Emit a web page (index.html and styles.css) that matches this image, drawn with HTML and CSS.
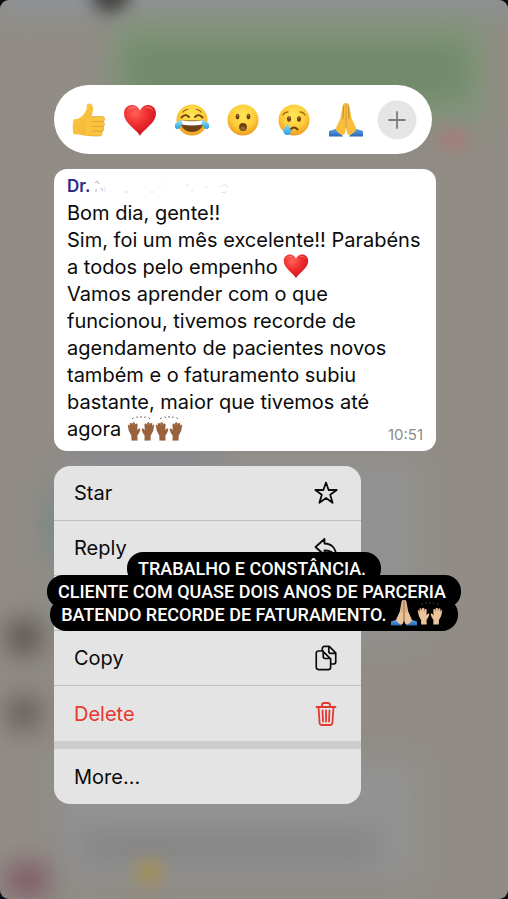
FILE: index.html
```html
<!DOCTYPE html>
<html lang="pt-BR">
<head>
    <meta charset="UTF-8">
    <meta name="viewport" content="width=device-width, initial-scale=1.0">
    <title>Mensagem</title>
    <link rel="stylesheet" href="styles.css">
</head>
<body>
    <!-- Shared emoji shapes -->
    <svg class="sprites" width="0" height="0" aria-hidden="true">
        <defs>
            <radialGradient id="face" cx="50%" cy="35%" r="65%">
                <stop offset="0" stop-color="#ffe75a"/>
                <stop offset="0.6" stop-color="#fdcd38"/>
                <stop offset="1" stop-color="#ee9c24"/>
            </radialGradient>
            <linearGradient id="skin" x1="0" y1="0" x2="1" y2="1">
                <stop offset="0" stop-color="#fdcf4c"/>
                <stop offset="1" stop-color="#f0ac2a"/>
            </linearGradient>
            <radialGradient id="red" cx="35%" cy="25%" r="80%">
                <stop offset="0" stop-color="#ff6358"/>
                <stop offset="0.5" stop-color="#ef2b2d"/>
                <stop offset="1" stop-color="#c5141d"/>
            </radialGradient>
            <linearGradient id="tear" x1="0" y1="0" x2="0" y2="1">
                <stop offset="0" stop-color="#9fe3fb"/>
                <stop offset="1" stop-color="#279fe0"/>
            </linearGradient>
            <linearGradient id="sleeve" x1="0" y1="0" x2="0" y2="1">
                <stop offset="0" stop-color="#64a5ea"/>
                <stop offset="1" stop-color="#2967b5"/>
            </linearGradient>
        </defs>
        <symbol id="thumb" viewBox="0 0 34 34">
            <path fill="url(#skin)" d="M1.5 16.5C6 16 9 14.500 11.500 11.500C14 8.500 15 6 14.800 2.500C14.800-.2 19.500-.3 20.700 3C21.800 6.500 20.600 9.500 19.500 14H30Q32.500 15 31.500 18L31 28L27 33H17C12 33 8 30.800 1.500 31.300Q-.1 24 1.500 16.500Z"/>
            <g fill="#fac43f" stroke="#dc982a" stroke-width=".6">
                <rect x="18" y="13.500" width="14.500" height="5.300" rx="2.600"/>
                <rect x="18.500" y="18.500" width="14" height="5.200" rx="2.600"/>
                <rect x="18" y="23.400" width="13.800" height="5" rx="2.500"/>
                <rect x="17.500" y="28.200" width="12.500" height="4.800" rx="2.400"/>
            </g>
            <path fill="#f9c340" d="M14 14h7c-1.500 2-1.500 4-1 6.500 1 3-.5 5.500 0 8l-2 4-5-1z"/>
        </symbol>
        <symbol id="heart" viewBox="0 0 34 34">
            <path fill="url(#red)" d="M17 33C14.500 27 1 20.500 1 10.500C1 1 13 -1 17 7.500C21-1 33 1 33 10.500C33 20.500 19.500 27 17 33Z"/>
            <path fill="#ff9d91" opacity=".6" d="M4 8.500C5 3.500 11 2.500 14 5.500C10 4.500 6 5 4 8.500ZM21 5.500C24 2.500 29.500 3.500 30.500 8.500C28 5 25 4.500 21 5.500Z"/>
        </symbol>
        <symbol id="joy" viewBox="0 0 34 34">
            <circle cx="17" cy="17" r="15.500" fill="url(#face)"/>
            <path fill="none" stroke="#8a5312" stroke-width="1.200" stroke-linecap="round" d="M8 9Q9.500 6.500 12.500 6.500M21.500 6.500Q24.500 6.500 26 9"/>
            <path fill="none" stroke="#6b3f0e" stroke-width="1.900" stroke-linecap="round" d="M6.500 14.500Q10.500 10 14 14M20 14Q23.500 10 27.500 14.500"/>
            <path fill="#704018" d="M5.500 17.500H28.500C28.500 25 23.500 29 17 29S5.500 25 5.500 17.500Z"/>
            <path fill="#fff" d="M6 17.300Q17 19 28 17.300Q28 20 26.500 21.800Q17 23 7.500 21.800Q6 20 6 17.300Z"/>
            <path fill="url(#tear)" d="M7 16.500C7.500 21 6.500 25.500 2.800 26C-.8 26.300-1.400 21.500 1.500 19.500Q4 18 7 16.500ZM27 16.500C26.500 21 27.500 25.500 31.200 26C34.800 26.300 35.400 21.500 32.500 19.500Q30 18 27 16.500Z"/>
        </symbol>
        <symbol id="wow" viewBox="0 0 34 34">
            <circle cx="17" cy="17" r="15.500" fill="url(#face)"/>
            <ellipse cx="11.500" cy="13.500" rx="1.900" ry="2.700" fill="#6b3f0e"/>
            <ellipse cx="22.500" cy="13.500" rx="1.900" ry="2.700" fill="#6b3f0e"/>
            <circle cx="11.200" cy="12.500" r=".7" fill="#c9a06b"/>
            <circle cx="22.200" cy="12.500" r=".7" fill="#c9a06b"/>
            <ellipse cx="17" cy="24" rx="3.900" ry="4" fill="#6b3f0e"/>
            <ellipse cx="17" cy="25.500" rx="2.600" ry="2" fill="#9a632b"/>
        </symbol>
        <symbol id="sad" viewBox="0 0 34 34">
            <circle cx="17" cy="17" r="15.500" fill="url(#face)"/>
            <ellipse cx="12" cy="16" rx="2" ry="2.800" fill="#6b3f0e"/>
            <ellipse cx="22" cy="16" rx="2" ry="2.800" fill="#6b3f0e"/>
            <circle cx="12" cy="15" r=".7" fill="#c9a06b"/>
            <circle cx="22" cy="15" r=".7" fill="#c9a06b"/>
            <path fill="none" stroke="#a96e1c" stroke-width="1.400" stroke-linecap="round" d="M6 12Q7.500 9 11 9M28 12Q26.500 9 23 9"/>
            <path fill="none" stroke="#6b3f0e" stroke-width="1.900" stroke-linecap="round" d="M13.500 26.500Q17 22.500 20.500 26.500"/>
            <path fill="url(#tear)" d="M10.500 19.500C11.500 23.500 14 25.500 14 28.200C14 30.500 12.300 32 10.300 32S6.500 30.500 6.500 28.200C6.500 25.500 9.800 23.500 10.500 19.500Z"/>
        </symbol>
        <symbol id="pray" viewBox="0 0 34 34">
            <path fill="url(#sleeve)" d="M0 28L8 25.500L14 33.500H0ZM34 28L26 25.500L20 33.500H34Z"/>
            <path fill="currentColor" d="M16.800 0C14.500-.3 13.700 1.500 13.500 4L11.500 15L6.500 26C8 29 11 31.500 14 32.500C16 31 16.800 28 16.800 24ZM17.200 0C19.500-.3 20.300 1.500 20.500 4L22.500 15L27.500 26C26 29 23 31.500 20 32.500C18 31 17.200 28 17.200 24Z"/>
            <path fill="none" stroke="#8d5514" stroke-opacity=".6" stroke-width=".8" d="M17 1V25M14.500 3L14 16M19.500 3L20 16"/>
        </symbol>
        <symbol id="hands" viewBox="0 0 28 26">
            <path fill="currentColor" stroke="#000" stroke-opacity=".12" stroke-width=".4" d="M4.500 25.500L4.300 20.500Q1.200 16 .8 10.500Q1.200 9 2.400 10.500L3 12L2.600 8.700Q3.800 7.100 5 8.700L5.300 11L5.500 7.800Q6.800 6.600 7.900 8L7.800 11.500L8.300 9Q9.800 8 10.500 9.500L10.200 15.500L11.500 13.800Q13.400 13 13.200 15Q12.500 18 10.300 20.500L10.500 25.500Z"/>
            <path fill="currentColor" stroke="#000" stroke-opacity=".12" stroke-width=".4" d="M23.500 25.500L23.700 20.500Q26.800 16 27.200 10.500Q26.800 9 25.600 10.500L25 12L25.400 8.700Q24.200 7.100 23 8.700L22.700 11L22.500 7.800Q21.200 6.600 20.100 8L20.200 11.500L19.700 9Q18.200 8 17.500 9.500L17.800 15.500L16.500 13.800Q14.600 13 14.800 15Q15.500 18 17.700 20.500L17.500 25.500Z"/>
            <path fill="none" stroke="#555" stroke-width="1" d="M5 4L6.500 2.700M9.800 1.500L10.500 3M14 1V2.700M18.200 1.500L17.500 3M23 4L21.500 2.700"/>
        </symbol>
    </svg>

    <div class="screen">
        <!-- Blurred chat behind the menu -->
        <div class="backdrop" aria-hidden="true">
            <div class="blob top"></div>
            <div class="blob head"></div>
            <div class="blob green"></div>
            <div class="blob green-dark"></div>
            <div class="blob pink"></div>
            <div class="blob teal"></div>
            <div class="blob violet"></div>
            <div class="blob grey"></div>
            <div class="blob brown"></div>
            <div class="blob brown second"></div>
            <div class="blob grey low"></div>
            <div class="blob shade"></div>
            <div class="blob yellow"></div>
            <div class="blob rose"></div>
        </div>

        <main>
            <div class="reactions">
                <button aria-label="👍"><svg><use href="#thumb"/></svg></button>
                <button aria-label="❤️"><svg><use href="#heart"/></svg></button>
                <button aria-label="😂"><svg><use href="#joy"/></svg></button>
                <button aria-label="😮"><svg><use href="#wow"/></svg></button>
                <button aria-label="😢"><svg><use href="#sad"/></svg></button>
                <button aria-label="🙏"><svg class="gold"><use href="#pray"/></svg></button>
                <button class="plus" aria-label="+"><svg viewBox="0 0 40 40"><circle cx="20" cy="20" r="19.500" fill="#e5e5e6"/><path d="M20 12V28M12 20H28" stroke="#7d7d80" stroke-width="1.800" stroke-linecap="round"/></svg></button>
            </div>

            <article class="message">
                <h1>Dr. <svg class="smudge" viewBox="0 0 140 14" aria-hidden="true"><path d="M1 3L3 1L5 4M2 9V12M7 8L9 11" stroke="#7774b8" stroke-opacity=".6" fill="none"/><path d="M11 7V12M30 12H34M56 12H60M72 3V5M92 5H95M98 10V13M111 6L113 8M126 7Q131 3 134 7M133 11Q130 14 127 12" stroke="#d4d2e8" stroke-opacity=".7" fill="none"/></svg></h1>
                <p>Bom dia, gente!!<br>
                Sim, foi um mês excelente!! Parabéns<br>
                a todos pelo empenho <svg class="emoji" role="img" aria-label="❤️"><use href="#heart"/></svg><br>
                Vamos aprender com o que<br>
                funcionou, tivemos recorde de<br>
                agendamento de pacientes novos<br>
                também e o faturamento subiu<br>
                bastante, maior que tivemos até</p>
                <div class="last-line">
                    <p>agora <svg class="emoji wide" role="img" aria-label="🙌🏾"><use href="#hands"/></svg><svg class="emoji wide" role="img" aria-label="🙌🏾"><use href="#hands"/></svg></p>
                    <time>10:51</time>
                </div>
            </article>

            <div class="menu">
                <button>Star
                    <svg viewBox="0 0 26 26"><path d="M13 2.500L15.600 10H23.700L17.200 14.700L19.600 22.800L13 18L6.400 22.800L8.800 14.700L2.300 10H10.400Z"/></svg>
                </button>
                <button>Reply
                    <svg viewBox="0 0 26 26"><path d="M11.500 4L2.500 12L11.500 20V15.500C16 15.500 20 17 23 21C23 13 18.500 8.500 11.500 8.500Z"/></svg>
                </button>
                <div class="row"></div>
                <button>Copy
                    <svg viewBox="0 0 26 28"><path d="M9 6V4Q9 1.500 11.500 1.500H16.500L23.500 8.500V18Q23.500 20.500 21 20.500H18.500M16 1.500V7Q16 9 18 9H23.500M5 6.500H9.500L18 15V24Q18 26.500 15.500 26.500H5Q2.500 26.500 2.500 24V9Q2.500 6.500 5 6.500ZM10 6.500V12.500Q10 14.500 12 14.500H18"/></svg>
                </button>
                <button class="delete">Delete
                    <svg viewBox="0 0 26 26"><path d="M3.500 6H22.500M9 6V4Q9 2 11 2H15Q17 2 17 4V6M5.500 6L6.600 22Q6.800 24 8.800 24H17.200Q19.200 24 19.400 22L20.500 6M9.500 9.500L10 20.500M13 9.500V20.500M16.500 9.500L16 20.500"/></svg>
                </button>
                <button class="more">More...</button>
            </div>
        </main>

        <!-- Story caption lies over the menu -->
        <div class="caption">
            <p><span>TRABALHO E CONSTÂNCIA.</span></p>
            <p><span>CLIENTE COM QUASE DOIS ANOS DE PARCERIA</span></p>
            <p><span>BATENDO RECORDE DE FATURAMENTO. <svg class="emoji" role="img" aria-label="🙏🏼"><use href="#pray"/></svg><svg class="emoji" role="img" aria-label="🙌🏼"><use href="#hands"/></svg></span></p>
        </div>
    </div>
</body>
</html>
```
FILE: styles.css
```css
* {
    box-sizing: border-box;
}
body {
    margin: 0;
    background-color: #0c0f18;
    color: #0b0b0b;
    font-family: Inter, "Liberation Sans", sans-serif;
}
h1, p {
    margin: 0;
}
button {
    border: none;
    background: none;
    padding: 0;
    color: inherit;
    font: inherit;
}
.sprites {
    position: absolute;
}
.screen {
    position: relative;
    min-height: 100vh;
    overflow: hidden;
    border-radius: 9px;
    background-color: #918d86;
}
main {
    position: relative;
    padding: 85px 72px 94px 54px;
}

/* Blurred background */
.backdrop {
    position: absolute;
    inset: 0;
}
.blob {
    position: absolute;
    filter: blur(14px);
}
.top {
    top: -20px;
    left: 0;
    right: 0;
    height: 34px;
    background-color: #8d9398;
}
.head {
    top: -24px;
    left: 92px;
    width: 38px;
    height: 38px;
    border-radius: 50%;
    background-color: #454342;
    filter: blur(8px);
}
.green {
    top: 20px;
    left: 112px;
    right: 24px;
    height: 100px;
    background-color: #82977a;
}
.green-dark {
    top: 42px;
    left: 125px;
    right: 40px;
    height: 58px;
    background-color: #72896a;
}
.pink {
    top: 130px;
    right: 42px;
    width: 26px;
    height: 18px;
    background-color: #a67a76;
    filter: blur(8px);
}
.teal {
    top: 490px;
    left: 48px;
    width: 40px;
    height: 70px;
    background-color: #6f8482;
}
.violet {
    top: 454px;
    left: 70px;
    width: 150px;
    height: 14px;
    background-color: #75738a;
}
.grey {
    top: 460px;
    left: 60px;
    right: 90px;
    height: 180px;
    background-color: #929292;
}
.grey.low {
    top: 760px;
    height: 120px;
}
.brown {
    top: 620px;
    left: 7px;
    width: 34px;
    height: 34px;
    border-radius: 50%;
    background-color: #4c443f;
}
.brown.second {
    top: 696px;
    background-color: #5c524c;
}
.shade {
    top: 834px;
    left: 80px;
    right: 130px;
    height: 26px;
    background-color: #838383;
}
.yellow {
    top: 860px;
    left: 136px;
    width: 26px;
    height: 24px;
    background-color: #a28f5c;
    filter: blur(8px);
}
.rose {
    top: 866px;
    left: 8px;
    width: 38px;
    height: 28px;
    background-color: #7c4c5f;
}

/* Emoji reactions */
.reactions {
    display: grid;
    grid-template-columns: repeat(7, 1fr);
    align-items: center;
    height: 69px;
    margin: 0 4px 15px 0;
    padding: 0 9px;
    border-radius: 35px;
    background-color: #fff;
}
.reactions svg {
    display: block;
    width: 34px;
    height: 34px;
    margin: auto;
}
.reactions .plus svg {
    width: 40px;
    height: 40px;
}
.gold {
    color: #f9bd39;
}

/* Message bubble */
.message {
    margin-bottom: 15px;
    padding: 4px 13px 8px;
    border-radius: 13px;
    background-color: #fff;
    font-size: 20px;
    line-height: 27px;
    white-space: nowrap;
}
.message h1 {
    color: #2d2b83;
    font-size: 17px;
    font-weight: 600;
    line-height: 27px;
}
.smudge {
    width: 140px;
    height: 14px;
    vertical-align: -2px;
}
.emoji {
    width: 26px;
    height: 26px;
    margin: -4px 0;
    vertical-align: -1px;
}
.wide {
    width: 28px;
    color: #99623c;
}
.last-line {
    display: flex;
    justify-content: space-between;
}
.message time {
    padding-top: 11px;
    color: #8b8b8d;
    font-size: 15px;
    line-height: 16px;
}

/* Context menu */
.menu {
    max-width: 307px;
    overflow: hidden;
    border-radius: 16px;
    background-color: #e4e4e4;
}
.menu button, .row {
    display: flex;
    justify-content: space-between;
    align-items: center;
    width: 100%;
    height: 55px;
    padding: 0 22px 0 20px;
    border-bottom: 1px solid #bdbebf;
    font-size: 20px;
}
.menu svg {
    width: 26px;
    height: 26px;
    fill: none;
    stroke: currentColor;
    stroke-width: 1.8;
    stroke-linejoin: round;
    stroke-linecap: round;
}
.menu .delete {
    height: 63px;
    border-bottom: 8px solid #cdcdce;
    color: #e5392f;
}
.menu .more {
    border-bottom: none;
}

/* Caption */
.caption {
    position: absolute;
    top: 552px;
    left: 0;
    right: 0;
    display: flex;
    flex-direction: column;
    align-items: center;
    color: #fff;
    font-family: Roboto, "Liberation Sans", sans-serif;
    font-size: 18px;
    font-weight: 500;
    line-height: 33px;
    white-space: nowrap;
}
.caption p {
    height: 33px;
    padding: 0 15px 0 11px;
    border-radius: 16px;
    background-color: #000;
}
.caption p + p {
    margin-top: -10px;
}
.caption span {
    position: relative;
    z-index: 1;
}
.caption .emoji {
    color: #edc39c;
}
```
